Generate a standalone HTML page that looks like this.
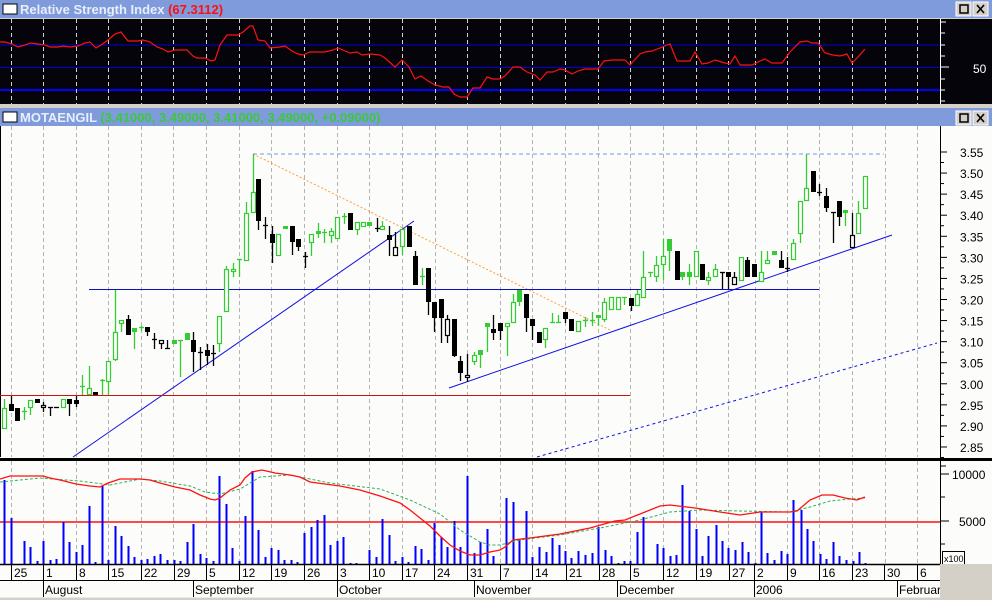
<!DOCTYPE html>
<html><head><meta charset="utf-8"><style>
body{margin:0;width:992px;height:600px;overflow:hidden;background:#d4d0c8;font-family:"Liberation Sans",sans-serif}
svg{display:block}
</style></head><body>
<svg id="s" width="992" height="600" xmlns="http://www.w3.org/2000/svg" font-family="Liberation Sans, sans-serif">
<rect x="0" y="0" width="992" height="600" fill="#d4d0c8"/>
<!-- RSI title bar -->
<rect x="0" y="0" width="992" height="18" fill="#7f9bdc"/>
<rect x="3" y="4" width="14" height="10" fill="#fff" stroke="#000"/>
<text x="20" y="14" font-size="13" font-weight="bold" fill="#e8eefc">Relative Strength Index <tspan fill="#ff1010">(67.3112)</tspan></text>
<g id="btn1"></g>
<!-- RSI panel -->
<rect x="0" y="19" width="992" height="85" fill="#05040a"/>
<line x1="0" y1="45" x2="940" y2="45" stroke="#0000e0"/>
<line x1="0" y1="67.5" x2="940" y2="67.5" stroke="#0000e0"/>
<line x1="0" y1="90" x2="940" y2="90" stroke="#0000ff" stroke-width="2"/>
<g id="rsigrid" stroke="#d0d0d0" stroke-dasharray="4,3"></g>
<polyline fill="none" stroke="#ff1010" stroke-width="1.2" points="0,42 5,42 12,44 18,47 25,45 30,43 38,44 45,45 50,47 58,47 63,46 70,47 78,46 85,43 90,42 96,48 101,45 108,40 115,34 121,32 128,41 138,41 143,40 150,42 157,47 163,49 168,52 175,50 187,50 193,56 197,58 205,58 211,61 215,60 220,45 227,35 238,35 243,32 250,26 253,26 258,40 265,41 270,48 280,47 285,46 292,51 298,54 303,55 310,52 325,52 333,50 338,48 345,51 350,53 357,52 362,55 370,54 380,55 385,58 395,67 402,60 409,67 415,79 421,76 428,81 435,85 443,87 449,87 454,94 460,97 467,97 473,88 480,88 487,77 493,79 500,79 505,76 513,67 520,67 527,72 535,75 540,80 547,72 553,72 560,69 565,70 572,74 578,71 585,69 598,69 604,61 612,60 625,60 630,65 640,54 645,52 652,51 660,48 667,45 670,44 677,61 690,61 695,52 702,64 708,63 715,60 725,63 730,64 735,56 740,65 752,65 760,61 765,59 772,63 782,63 790,52 800,42 807,41 812,43 818,43 825,53 833,55 840,56 847,54 852,63 858,57 865,49"/>
<line x1="940.5" y1="19" x2="940.5" y2="104" stroke="#fff"/>
<g stroke="#fff"><line x1="940" y1="22" x2="946" y2="22"/><line x1="940" y1="33" x2="945" y2="33"/><line x1="940" y1="45" x2="945" y2="45"/><line x1="940" y1="56" x2="945" y2="56"/><line x1="940" y1="67" x2="949" y2="67"/><line x1="940" y1="79" x2="945" y2="79"/><line x1="940" y1="90" x2="945" y2="90"/><line x1="940" y1="101" x2="945" y2="101"/></g>
<text x="973" y="73" font-size="12" fill="#fff">50</text>
<!-- Main title -->
<rect x="0" y="108" width="992" height="18" fill="#7f9bdc"/>
<rect x="3" y="112" width="14" height="10" fill="#fff" stroke="#000"/>
<text x="20" y="122" font-size="13" font-weight="bold" fill="#e8eefc">MOTAENGIL <tspan fill="#3cc83c">(3.41000, 3.49000, 3.41000, 3.49000, +0.09000)</tspan></text>
<g id="btn2"></g>
<!-- main chart -->
<rect x="0" y="126" width="992" height="332" fill="#fcfdfa"/>
<line x1="0.5" y1="126" x2="0.5" y2="457" stroke="#000"/>
<g id="maingrid" stroke="#b4b4b4" stroke-dasharray="4,3"></g>
<line x1="253" y1="154" x2="884" y2="154" stroke="#6a9ae6" stroke-dasharray="4,3"/>
<line x1="253" y1="154" x2="610" y2="330" stroke="#ff9a40" stroke-dasharray="2,2"/>
<line x1="73" y1="457" x2="414" y2="221" stroke="#1010e0"/>
<line x1="89" y1="289.5" x2="819" y2="289.5" stroke="#0a10c0"/>
<line x1="0" y1="395.5" x2="630" y2="395.5" stroke="#d01010"/>
<line x1="449" y1="388" x2="892" y2="235" stroke="#1010e0"/>
<line x1="537" y1="457" x2="937" y2="343" stroke="#1010e0" stroke-dasharray="3,3"/>
<g id="candles"></g>
<line x1="940.5" y1="126" x2="940.5" y2="458" stroke="#000"/>
<g id="paxis"></g>
<!-- volume -->
<rect x="0" y="458" width="992" height="3" fill="#000"/>
<rect x="0" y="461" width="992" height="103" fill="#fcfdfa"/>
<g id="volgrid" stroke="#b4b4b4" stroke-dasharray="4,3"></g>
<line x1="0" y1="522" x2="940" y2="522" stroke="#ff1010" stroke-width="1.5"/>
<g id="vol" stroke="#0000ff" stroke-width="2"></g>
<polyline fill="none" stroke="#30b060" stroke-dasharray="3,2" points="0,482 40,478 80,481 110,485 140,479 160,481 190,486 205,492 220,494 240,489 260,477 290,475 330,483 380,489 410,500 440,514 460,530 480,542 490,545 500,545 520,540 560,535 600,528 640,520 670,512 700,510 740,511 790,512 810,507 830,501 850,499 865,498"/>
<polyline fill="none" stroke="#ff1010" stroke-width="1.3" points="0,479 10,476 30,476 43,476 50,478 60,480 76,484 90,486 100,487 108,483 120,479 140,479 150,480 160,483 175,487 190,490 200,495 210,499 215,500 220,498 230,490 240,485 245,478 252,472 262,470 275,473 290,475 300,477 310,482 325,484 340,486 360,490 380,496 400,503 410,510 420,518 430,526 440,536 450,545 460,551 470,555 480,555 490,552 500,550 505,547 513,540 530,538 560,534 590,528 615,521 625,520 640,514 660,506 670,505 695,508 720,512 740,515 760,512 790,512 797,511 810,500 822,495 833,495 845,498 857,500 865,497"/>
<line x1="940.5" y1="461" x2="940.5" y2="564" stroke="#000"/>
<g stroke="#000"><line x1="940" y1="466" x2="946" y2="466"/><line x1="940" y1="474" x2="949" y2="474"/><line x1="940" y1="497" x2="945" y2="497"/><line x1="940" y1="521" x2="949" y2="521"/><line x1="940" y1="544" x2="945" y2="544"/></g>
<text x="952" y="479" font-size="12">10000</text>
<text x="959" y="526" font-size="12">5000</text>
<rect x="942.5" y="551.5" width="22" height="13" fill="#fcfdfa" stroke="#000"/>
<text x="944" y="562" font-size="9">x100</text>
<!-- date axis -->
<rect x="0" y="564" width="940" height="33" fill="#fcfdfa"/>
<line x1="0" y1="564.5" x2="940" y2="564.5" stroke="#000" stroke-width="1.5"/>
<line x1="0" y1="580.5" x2="940" y2="580.5" stroke="#000"/>
<line x1="0" y1="597" x2="940" y2="597" stroke="#fff"/>
<g id="days" font-size="12"></g>
<g id="months" font-size="12"></g>
</svg>
<script>
const NS="http://www.w3.org/2000/svg";
function el(p,t,a,txt){const e=document.createElementNS(NS,t);for(const k in a)e.setAttribute(k,a[k]);if(txt!=null)e.textContent=txt;document.getElementById(p).appendChild(e);return e;}
const grid=[11,43,76,108,141,173,206,239,271,304,337,369,402,435,467,500,532,565,598,630,663,696,728,755,787,819,852,885,917];
grid.forEach(x=>{el('rsigrid','line',{x1:x+.5,y1:19,x2:x+.5,y2:104});el('maingrid','line',{x1:x+.5,y1:126,x2:x+.5,y2:457});el('volgrid','line',{x1:x+.5,y1:461,x2:x+.5,y2:564});});
['btn1','btn2'].forEach((b,i)=>{const y=i?111:2;
el(b,'rect',{x:956,y:y,width:15,height:14,fill:'#d4d0c8',stroke:'#fff'});el(b,'rect',{x:960,y:y+3,width:8,height:8,fill:'none',stroke:'#000','stroke-width':1.5});
el(b,'rect',{x:973,y:y,width:15,height:14,fill:'#d4d0c8',stroke:'#fff'});el(b,'path',{d:`M977 ${y+3}L984 ${y+11}M984 ${y+3}L977 ${y+11}`,stroke:'#000','stroke-width':1.6});});
// price axis
for(let i=0;i<=14;i++){const y=152+i*21.07;const p=(3.55-i*0.05).toFixed(2);
el('paxis','line',{x1:940,y1:y,x2:947,y2:y,stroke:'#000'});el('paxis','line',{x1:940,y1:y+10.5,x2:944,y2:y+10.5,stroke:'#000'});
el('paxis','text',{x:960,y:y+5,'font-size':12},p);}
const C=[[4,408,429,399,429,'g'],[11,404,411,396,411,'b'],[17,408,421,408,421,'b'],[24,411,411,407,420,'c'],[30,400,408,400,415,'g'],[37,399,403,399,403,'b'],[43,405,408,402,412,'w'],[50,407,407,407,416,'k'],[56,407,407,407,407,'k'],[63,399,408,399,408,'g'],[69,399,404,399,416,'b'],[76,400,404,396,407,'b'],[82,386,386,375,395,'c'],[89,388,395,366,395,'g'],[95,392,395,392,395,'b'],[102,380,380,379,395,'c'],[108,361,382,361,395,'g'],[115,332,360,290,361,'g'],[121,320,324,320,332,'g'],[128,319,335,315,335,'b'],[134,328,332,328,349,'G'],[141,327,327,326,331,'c'],[147,327,332,327,336,'b'],[154,339,339,333,349,'k'],[161,340,344,340,349,'w'],[167,348,348,340,348,'k'],[174,340,344,340,344,'G'],[180,340,340,340,377,'c'],[187,333,340,333,340,'G'],[193,340,352,332,372,'b'],[200,352,352,347,370,'k'],[207,350,356,344,365,'b'],[213,353,353,345,366,'k'],[219,316,344,316,352,'g'],[226,269,312,266,312,'g'],[233,269,272,263,277,'g'],[239,259,260,259,277,'c'],[246,213,261,202,261,'g'],[253,192,213,154,213,'g'],[258,179,221,179,230,'b'],[265,225,225,217,239,'k'],[272,234,243,226,263,'b'],[278,234,256,234,256,'g'],[285,226,229,226,229,'G'],[292,226,242,226,255,'b'],[298,239,247,239,251,'b'],[305,256,256,252,268,'k'],[311,234,243,234,256,'g'],[318,231,233,223,238,'G'],[324,232,232,229,243,'c'],[331,231,236,228,243,'g'],[337,217,239,217,239,'g'],[344,216,216,213,224,'c'],[350,213,230,213,230,'b'],[357,222,230,222,235,'g'],[363,222,227,222,227,'g'],[369,222,226,222,226,'G'],[377,228,228,218,232,'k'],[382,226,230,221,230,'g'],[389,235,240,226,256,'b'],[395,247,256,232,256,'w'],[402,229,247,229,255,'g'],[409,226,247,226,247,'b'],[415,256,285,251,285,'b'],[422,276,276,268,285,'c'],[428,268,302,268,315,'b'],[434,302,318,302,332,'b'],[441,299,318,299,343,'b'],[447,319,336,315,343,'w'],[454,319,356,319,357,'b'],[460,361,373,356,381,'b'],[467,375,378,354,382,'w'],[474,355,362,352,365,'g'],[480,350,355,350,368,'G'],[487,323,327,323,352,'G'],[493,329,333,315,340,'b'],[500,323,331,323,340,'b'],[507,323,327,323,356,'g'],[513,302,323,294,323,'g'],[519,290,302,290,306,'G'],[526,294,318,294,332,'b'],[532,319,326,319,340,'b'],[539,332,343,332,343,'b'],[545,328,340,328,348,'g'],[552,322,322,313,322,'c'],[558,322,322,315,322,'c'],[565,312,319,312,323,'b'],[571,319,331,319,331,'b'],[578,321,332,321,332,'g'],[585,320,320,317,327,'c'],[592,320,320,312,326,'c'],[598,315,318,315,326,'G'],[604,302,320,298,322,'g'],[611,297,310,297,310,'g'],[618,297,310,297,310,'g'],[624,297,297,297,305,'c'],[631,298,306,298,311,'b'],[637,294,306,290,306,'g'],[643,277,298,251,298,'g'],[650,272,272,272,277,'c'],[656,265,277,256,282,'g'],[663,256,265,239,280,'g'],[669,239,251,239,271,'G'],[677,251,280,251,280,'b'],[682,272,277,272,280,'G'],[689,272,277,264,285,'G'],[696,251,277,251,277,'g'],[702,264,280,264,280,'b'],[708,277,281,272,285,'g'],[715,269,277,264,277,'g'],[722,272,272,272,289,'k'],[728,272,277,272,289,'b'],[734,277,285,272,285,'w'],[741,257,281,257,281,'g'],[747,260,277,257,277,'b'],[754,264,277,264,277,'b'],[761,272,282,251,282,'g'],[767,260,264,251,264,'g'],[774,251,255,251,255,'G'],[781,260,268,251,268,'b'],[787,268,268,257,272,'k'],[793,243,260,239,260,'g'],[800,201,234,201,243,'g'],[806,188,201,154,201,'g'],[813,171,192,171,192,'b'],[819,192,192,184,196,'k'],[826,196,208,188,212,'b'],[833,212,212,212,243,'k'],[839,201,217,201,226,'b'],[845,210,213,210,226,'G'],[852,235,248,213,248,'w'],[858,213,234,201,234,'g'],[865,176,209,176,209,'g']];
C.forEach(([x,t,b,wt,wb,k])=>{const col=(k=='g'||k=='G'||k=='c')?'#33cc33':'#000';
el('candles','line',{x1:x+.5,y1:wt,x2:x+.5,y2:wb,stroke:col,'stroke-width':1.3});
if(k=='c'||k=='k'){el('candles','line',{x1:x-2,y1:t+.5,x2:x+3,y2:t+.5,stroke:col,'stroke-width':1.3});return;}
const h=Math.max(b-t,3);
if(k=='b'||k=='G')el('candles','rect',{x:x-2,y:t,width:5,height:h,fill:col});
else el('candles','rect',{x:x-1.5,y:t+.5,width:4,height:h-1,fill:'#fcfdfa',stroke:col,'stroke-width':1.2});});
const V=[[4,480],[11,518],[24,541],[30,547],[37,561],[43,541],[50,560],[56,559],[63,522],[69,542],[76,552],[82,545],[89,506],[95,562],[102,486],[108,560],[115,526],[121,536],[128,546],[134,557],[141,560],[147,559],[154,556],[160,554],[167,560],[174,560],[180,561],[187,542],[193,524],[200,554],[206,558],[213,561],[219,476],[226,504],[232,548],[239,561],[245,516],[252,471],[258,530],[265,557],[271,548],[278,550],[284,560],[291,560],[297,562],[304,533],[311,527],[317,520],[324,515],[330,545],[337,541],[343,537],[350,563],[356,563],[369,550],[376,557],[382,519],[389,535],[395,561],[402,557],[408,562],[415,546],[421,549],[428,560],[434,523],[441,537],[447,547],[454,521],[460,547],[467,476],[474,553],[480,542],[487,529],[493,556],[506,498],[513,502],[519,539],[526,511],[532,557],[539,547],[546,552],[552,538],[559,545],[565,551],[571,558],[578,551],[585,555],[592,553],[598,527],[605,550],[611,556],[618,563],[624,561],[630,561],[637,532],[643,517],[657,544],[663,548],[670,556],[676,555],[682,485],[689,511],[696,529],[702,556],[708,536],[716,525],[722,541],[728,548],[735,550],[742,542],[748,552],[755,563],[761,512],[767,553],[774,560],[781,551],[787,554],[793,500],[801,510],[807,529],[813,541],[820,554],[826,559],[833,542],[839,556],[846,560],[853,561],[859,552],[865,563]];
V.forEach(([x,y])=>el('vol','line',{x1:x+.5,y1:y,x2:x+.5,y2:564}));
const D=[[11,'25'],[43,'1'],[76,'8'],[108,'15'],[141,'22'],[174,'29'],[206,'5'],[239,'12'],[271,'19'],[304,'26'],[337,'3'],[369,'10'],[402,'17'],[434,'24'],[467,'31'],[500,'7'],[532,'14'],[566,'21'],[599,'28'],[630,'5'],[663,'12'],[696,'19'],[729,'27'],[754,'2'],[787,'9'],[819,'16'],[852,'23'],[884,'30'],[917,'6']];
D.forEach(([x,t])=>{el('days','line',{x1:x+.5,y1:564,x2:x+.5,y2:580,stroke:'#000'});el('days','text',{x:x+3,y:577},t);});
const M=[[43,'August'],[193,'September'],[337,'October'],[474,'November'],[617,'December'],[754,'2006'],[897,'February']];
M.forEach(([x,t])=>{el('months','line',{x1:x+.5,y1:580,x2:x+.5,y2:597,stroke:'#000'});el('months','text',{x:x+2,y:594},t);});
el('months','rect',{x:940,y:564,width:52,height:36,fill:'#d4d0c8'});
</script>
</body></html>
